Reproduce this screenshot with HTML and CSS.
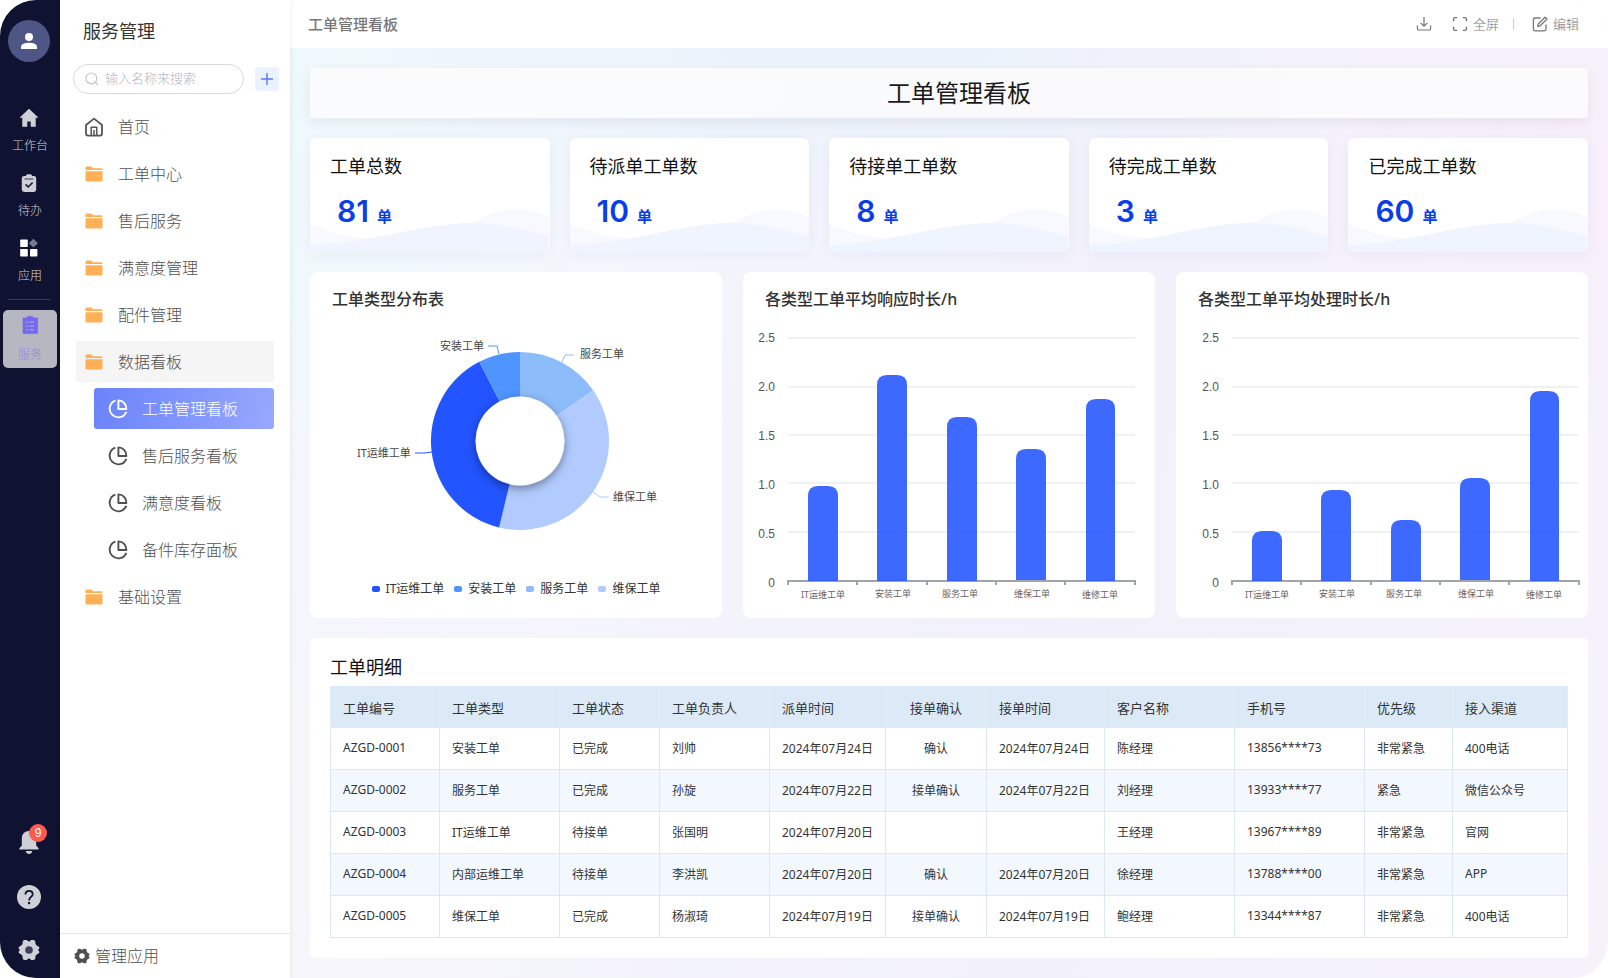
FILE: index.html
```
<!DOCTYPE html>
<html lang="zh-CN">
<head>
    <meta charset="UTF-8">
    <meta name="viewport" content="width=device-width, initial-scale=1.0">
    <title>工单管理看板</title>
    <link rel="stylesheet" href="styles.css">
</head>
<body>
    <!-- 公用图标 -->
    <svg class="symbols" aria-hidden="true">
        <symbol id="icon-folder" viewBox="0 0 18 16">
            <path d="M0.5 4V1.6C0.5 1 1 0.5 1.6 0.5H6.4L8.2 2.2H16C17 2.2 17.5 2.8 17.5 3.6V4Z" fill="#ffb056"/>
            <path d="M0.5 5.2H17.5V14.3C17.5 15 17 15.5 16.4 15.5H1.6C1 15.5 0.5 15 0.5 14.3Z" fill="#ffb056"/>
        </symbol>
        <symbol id="icon-pie" viewBox="0 0 20 20">
            <path d="M7.4 1.6A8.6 8.6 0 1 0 18.3 12.8" fill="none" stroke="currentColor" stroke-width="1.9"/>
            <path d="M10.4 1.4V10H18.4C18.4 5 15 1.6 10.4 1.4Z" fill="none" stroke="currentColor" stroke-width="1.9" stroke-linejoin="round"/>
        </symbol>
        <symbol id="icon-gear" viewBox="0 0 22 22">
            <path fill-rule="evenodd" fill="currentColor" d="M6.8 1H8.6C9.4 1 9.6 2.4 11 2.4S12.6 1 13.4 1H15.2C17 1 17.4 2.2 17.4 3.8C17.4 5.3 18 6.1 19.2 6.8C20.4 7.5 21.4 8 21.4 9C21.4 10 20.2 10 20.2 11S21.4 12 21.4 13C21.4 14 20.4 14.5 19.2 15.2C18 15.9 17.4 16.7 17.4 18.2C17.4 19.8 17 21 15.2 21H13.4C12.6 21 12.4 19.6 11 19.6S9.4 21 8.6 21H6.8C5 21 4.6 19.8 4.6 18.2C4.6 16.7 4 15.9 2.8 15.2C1.6 14.5 0.6 14 0.6 13C0.6 12 1.8 12 1.8 11S0.6 10 0.6 9C0.6 8 1.6 7.5 2.8 6.8C4 6.1 4.6 5.3 4.6 3.8C4.6 2.2 5 1 6.8 1ZM11 7.2A3.8 3.8 0 1 0 11 14.8A3.8 3.8 0 1 0 11 7.2Z"/>
        </symbol>
        <symbol id="wave" viewBox="0 0 240 43" preserveAspectRatio="none">
            <path d="M0 15C25 26 55 31 80 31C115 31 140 25 165 13C180 5 192 0 207 0C220 0 231 4 240 9V43H0Z" fill="#f8f9ff"/>
            <path d="M0 36C25 35 45 32 62 29C90 24 130 14 160 14C190 14 215 20 240 28V43H0Z" fill="#eff4ff"/>
        </symbol>
    </svg>

    <div class="app">
        <aside class="rail">
            <button class="avatar" aria-label="个人中心">
                <svg width="18" height="18" viewBox="0 0 18 18" fill="#fff"><circle cx="9" cy="5" r="4"/><path d="M1 17V15C1 12 5 10.8 9 10.8S17 12 17 15V17Z"/></svg>
            </button>
            <nav class="rail-nav">
                <a class="rail-item" href="#">
                    <svg width="20" height="20" viewBox="0 0 20 20" fill="#cfd0d6"><path d="M10 1L19 9.6H16.4V18.4H12V13.2H8V18.4H3.6V9.6H1Z" stroke="#cfd0d6" stroke-width="0.6" stroke-linejoin="round"/></svg>
                    <span>工作台</span>
                </a>
                <a class="rail-item" href="#">
                    <svg width="20" height="20" viewBox="0 0 20 20"><rect x="2.8" y="3" width="14.4" height="16" rx="2.4" fill="#cfd0d6"/><rect x="7" y="1.2" width="6" height="4.6" rx="1.6" fill="#cfd0d6"/><path d="M5.6 6H14.4" stroke="#0f1230" stroke-width="0.8"/><path d="M6.6 11.4L9.2 14L13.6 9.4" fill="none" stroke="#0f1230" stroke-width="1.5"/></svg>
                    <span>待办</span>
                </a>
                <a class="rail-item" href="#">
                    <svg width="20" height="20" viewBox="0 0 20 20" fill="#fff"><rect x="1.2" y="1.6" width="7.6" height="7.4" rx="0.8"/><rect x="1.2" y="11" width="7.6" height="7.6" rx="0.8"/><rect x="11" y="11" width="7.4" height="7.6" rx="0.8"/><path d="M14.4 0.8L19 5.2L14.4 9.6L9.8 5.2Z" fill="#777a8e"/></svg>
                    <span>应用</span>
                </a>
                <hr>
                <a class="rail-item active" href="#">
                    <svg width="20" height="20" viewBox="0 0 20 20"><path d="M3 3H7V1.8H8.4L10 0.8L11.6 1.8H13V3H17.6V18.6H3Z" fill="#7468f2" stroke="#7468f2" stroke-width="0.6" stroke-linejoin="round"/><path d="M5.8 7.2L6.6 8L7.8 6.4M9.4 7.2H14M5.8 11L6.6 11.8L7.8 10.2M9.4 11H14M5.8 14.8L6.6 15.6L7.8 14M9.4 14.8H14" fill="none" stroke="#b7b7c2" stroke-width="1"/></svg>
                    <span>服务</span>
                </a>
            </nav>
            <div class="rail-tools">
                <button class="rail-tool" aria-label="通知">
                    <svg width="22" height="26" viewBox="0 0 22 26" fill="#cfd0d6"><path d="M11 2C15.2 2 18.2 5 18.2 9.6V16.6L20.6 19.2V20.6H1.4V19.2L3.8 16.6V9.6C3.8 5 6.8 2 11 2Z"/><path d="M7.8 22H14.2C14 24 12.8 25 11 25S8 24 7.8 22Z"/></svg>
                    <span class="badge">9</span>
                </button>
                <button class="rail-tool" aria-label="帮助">
                    <svg width="24" height="24" viewBox="0 0 24 24"><circle cx="12" cy="12" r="12" fill="#cfd0d6"/><path d="M8.4 9.6C8.4 7.2 9.8 5.8 12 5.8S15.7 7.2 15.7 9.2C15.7 11.8 12 12.2 12 15.4" fill="none" stroke="#0f1230" stroke-width="1.8"/><rect x="11" y="17" width="2.2" height="2.2" fill="#0f1230"/></svg>
                </button>
                <button class="rail-tool" aria-label="设置">
                    <svg width="22" height="22"><circle cx="11" cy="11" r="5" fill="#3c3f5a"/><use href="#icon-gear"/></svg>
                </button>
            </div>
        </aside>

        <aside class="sidebar">
            <h2 class="sidebar-title">服务管理</h2>
            <div class="search-row">
                <label class="search">
                    <svg width="14" height="14" viewBox="0 0 14 14" fill="none" stroke="#c0c4cc" stroke-width="1.2"><circle cx="6.4" cy="6.4" r="5.4"/><path d="M10.4 10.4L13 13"/></svg>
                    <input type="text" placeholder="输入名称来搜索" aria-label="搜索">
                </label>
                <button class="add" aria-label="新增">
                    <svg width="12" height="12" viewBox="0 0 12 12" stroke="#5b79f7" stroke-width="1.4"><path d="M6 0V12M0 6H12"/></svg>
                </button>
            </div>
            <nav class="menu">
                <a class="menu-item" href="#">
                    <svg width="20" height="20" viewBox="0 0 20 20" fill="none" stroke="#555" stroke-width="1.8" stroke-linejoin="round"><path d="M2 8L10 1.6L18 8V16.6C18 18 17.4 18.6 16 18.6H4C2.6 18.6 2 18 2 16.6Z"/><path d="M7.2 18.4V10.2H12.8V18.4M10 13V18.4" stroke-width="1.5"/></svg>
                    首页
                </a>
                <a class="menu-item" href="#"><svg width="20" height="16"><use href="#icon-folder"/></svg>工单中心</a>
                <a class="menu-item" href="#"><svg width="20" height="16"><use href="#icon-folder"/></svg>售后服务</a>
                <a class="menu-item" href="#"><svg width="20" height="16"><use href="#icon-folder"/></svg>满意度管理</a>
                <a class="menu-item" href="#"><svg width="20" height="16"><use href="#icon-folder"/></svg>配件管理</a>
                <a class="menu-item open" href="#"><svg width="20" height="16"><use href="#icon-folder"/></svg>数据看板</a>
                <a class="menu-item sub active" href="#"><svg width="20" height="20"><use href="#icon-pie"/></svg>工单管理看板</a>
                <a class="menu-item sub" href="#"><svg width="20" height="20"><use href="#icon-pie"/></svg>售后服务看板</a>
                <a class="menu-item sub" href="#"><svg width="20" height="20"><use href="#icon-pie"/></svg>满意度看板</a>
                <a class="menu-item sub" href="#"><svg width="20" height="20"><use href="#icon-pie"/></svg>备件库存面板</a>
                <a class="menu-item" href="#"><svg width="20" height="16"><use href="#icon-folder"/></svg>基础设置</a>
            </nav>
            <a class="sidebar-footer" href="#"><svg width="16" height="16"><use href="#icon-gear"/></svg>管理应用</a>
        </aside>

        <main class="main">
            <header class="topbar">
                <span class="topbar-title">工单管理看板</span>
                <div class="topbar-actions">
                    <button class="action" aria-label="下载">
                        <svg width="16" height="16" viewBox="0 0 16 16" fill="none" stroke="#777" stroke-width="1.2"><path d="M8 1V10M4.6 6.8L8 10.2L11.4 6.8M1.4 9.4V12.4C1.4 13.4 2 14 3 14H13C14 14 14.6 13.4 14.6 12.4V9.4"/></svg>
                    </button>
                    <button class="action">
                        <svg width="16" height="16" viewBox="0 0 16 16" fill="none" stroke="#777" stroke-width="1.4"><path d="M1.6 5.2V3C1.6 2 2 1.6 3 1.6H5.2M10.8 1.6H13C14 1.6 14.4 2 14.4 3V5.2M14.4 10.8V13C14.4 14 14 14.4 13 14.4H10.8M5.2 14.4H3C2 14.4 1.6 14 1.6 13V10.8"/></svg>
                        全屏
                    </button>
                    <span class="divider"></span>
                    <button class="action">
                        <svg width="16" height="16" viewBox="0 0 16 16" fill="none" stroke="#777" stroke-width="1.3" stroke-linejoin="round"><path d="M8.6 2H3C2 2 1.4 2.6 1.4 3.6V13C1.4 14 2 14.8 3 14.8H12.4C13.4 14.8 14 14 14 13V8.4"/><path d="M5.8 10.4L6.2 8L13 1.2L15 3L8.2 9.8Z"/></svg>
                        编辑
                    </button>
                </div>
            </header>

            <div class="content">
                <h1 class="board-title">工单管理看板</h1>

                <section class="stats">
                    <div class="stat">
                        <svg class="stat-wave"><use href="#wave"/></svg>
                        <h3>工单总数</h3>
                        <p><strong>81</strong><span>单</span></p>
                    </div>
                    <div class="stat">
                        <svg class="stat-wave"><use href="#wave"/></svg>
                        <h3>待派单工单数</h3>
                        <p><strong>10</strong><span>单</span></p>
                    </div>
                    <div class="stat">
                        <svg class="stat-wave"><use href="#wave"/></svg>
                        <h3>待接单工单数</h3>
                        <p><strong>8</strong><span>单</span></p>
                    </div>
                    <div class="stat">
                        <svg class="stat-wave"><use href="#wave"/></svg>
                        <h3>待完成工单数</h3>
                        <p><strong>3</strong><span>单</span></p>
                    </div>
                    <div class="stat">
                        <svg class="stat-wave"><use href="#wave"/></svg>
                        <h3>已完成工单数</h3>
                        <p><strong>60</strong><span>单</span></p>
                    </div>
                </section>

                <section class="charts">
                    <div class="card chart-card">
                        <h3>工单类型分布表</h3>
                        <svg class="chart" viewBox="0 0 412 260">
                            <defs>
                                <filter id="hole-shadow" x="-30%" y="-30%" width="160%" height="160%">
                                    <feDropShadow dx="0" dy="3" stdDeviation="5" flood-color="#000" flood-opacity="0.4"/>
                                </filter>
                            </defs>
                            <path d="M210 129V40A89 89 0 0 1 283.3 78.5Z" fill="#8dbcfa"/>
                            <path d="M210 129L283.3 78.5A89 89 0 0 1 189.1 215.5Z" fill="#b1cbff"/>
                            <path d="M210 129L189.1 215.5A89 89 0 0 1 169.3 49.8Z" fill="#2254ff"/>
                            <path d="M210 129L169.3 49.8A89 89 0 0 1 210 40Z" fill="#4f95ff"/>
                            <circle cx="210" cy="129" r="44.5" fill="#fff" filter="url(#hole-shadow)"/>
                            <g fill="none">
                                <path d="M178 34H187L189 42" stroke="#4f95ff"/>
                                <path d="M264 43H255L252 50" stroke="#8dbcfa"/>
                                <path d="M105 141H115L122 140" stroke="#2254ff"/>
                                <path d="M299 185H290L283 180" stroke="#b1cbff"/>
                            </g>
                            <g class="pie-label">
                                <text x="130" y="38">安装工单</text>
                                <text x="270" y="46">服务工单</text>
                                <text x="47" y="145">IT运维工单</text>
                                <text x="303" y="189">维保工单</text>
                            </g>
                        </svg>
                        <ul class="legend">
                            <li class="c-it">IT运维工单</li>
                            <li class="c-install">安装工单</li>
                            <li class="c-service">服务工单</li>
                            <li class="c-keep">维保工单</li>
                        </ul>
                    </div>

                    <div class="card chart-card">
                        <h3>各类型工单平均响应时长/h</h3>
                        <svg class="chart" viewBox="0 0 412 300">
                            <path class="grid" d="M45 26H392M45 75H392M45 123H392M45 171H392M45 220H392"/>
                            <path class="axis" d="M45 273V269H392V273M114 269V273M184 269V273M253 269V273M322 269V273"/>
                            <g class="bars">
                                <path d="M65 269V184Q65 174 75 174H85Q95 174 95 184V269Z"/>
                                <path d="M134 269V73Q134 63 144 63H154Q164 63 164 73V269Z"/>
                                <path d="M204 269V115Q204 105 214 105H224Q234 105 234 115V269Z"/>
                                <path d="M273 268V147Q273 137 283 137H293Q303 137 303 147V268Z"/>
                                <path d="M343 269V97Q343 87 353 87H362Q372 87 372 97V269Z"/>
                            </g>
                            <g class="y-label">
                                <text x="32" y="30">2.5</text>
                                <text x="32" y="79">2.0</text>
                                <text x="32" y="128">1.5</text>
                                <text x="32" y="177">1.0</text>
                                <text x="32" y="226">0.5</text>
                                <text x="32" y="275">0</text>
                            </g>
                            <g class="x-label">
                                <text x="80" y="286">IT运维工单</text>
                                <text x="150" y="285">安装工单</text>
                                <text x="217" y="285">服务工单</text>
                                <text x="289" y="285">维保工单</text>
                                <text x="357" y="286">维修工单</text>
                            </g>
                        </svg>
                    </div>

                    <div class="card chart-card">
                        <h3>各类型工单平均处理时长/h</h3>
                        <svg class="chart" viewBox="-11 0 412 300">
                            <path class="grid" d="M45 26H392M45 75H392M45 123H392M45 171H392M45 220H392"/>
                            <path class="axis" d="M45 273V269H392V273M114 269V273M184 269V273M253 269V273M322 269V273"/>
                            <g class="bars">
                                <path d="M65 269V229Q65 219 75 219H85Q95 219 95 229V269Z"/>
                                <path d="M134 269V188Q134 178 144 178H154Q164 178 164 188V269Z"/>
                                <path d="M204 269V218Q204 208 214 208H224Q234 208 234 218V269Z"/>
                                <path d="M273 268V176Q273 166 283 166H293Q303 166 303 176V268Z"/>
                                <path d="M343 269V89Q343 79 353 79H362Q372 79 372 89V269Z"/>
                            </g>
                            <g class="y-label">
                                <text x="32" y="30">2.5</text>
                                <text x="32" y="79">2.0</text>
                                <text x="32" y="128">1.5</text>
                                <text x="32" y="177">1.0</text>
                                <text x="32" y="226">0.5</text>
                                <text x="32" y="275">0</text>
                            </g>
                            <g class="x-label">
                                <text x="80" y="286">IT运维工单</text>
                                <text x="150" y="285">安装工单</text>
                                <text x="217" y="285">服务工单</text>
                                <text x="289" y="285">维保工单</text>
                                <text x="357" y="286">维修工单</text>
                            </g>
                        </svg>
                    </div>
                </section>

                <section class="card table-card">
                    <h3>工单明细</h3>
                    <table class="orders">
                        <colgroup>
                            <col class="w-no"><col class="w-type"><col class="w-state"><col class="w-owner"><col class="w-sent"><col class="w-confirm"><col class="w-taken"><col class="w-client"><col class="w-phone"><col class="w-level"><col class="w-from">
                        </colgroup>
                        <thead>
                            <tr><th>工单编号</th><th>工单类型</th><th>工单状态</th><th>工单负责人</th><th>派单时间</th><th class="center">接单确认</th><th>接单时间</th><th>客户名称</th><th>手机号</th><th>优先级</th><th>接入渠道</th></tr>
                        </thead>
                        <tbody>
                            <tr><td>AZGD-0001</td><td>安装工单</td><td>已完成</td><td>刘帅</td><td>2024年07月24日</td><td class="center">确认</td><td>2024年07月24日</td><td>陈经理</td><td>13856****73</td><td>非常紧急</td><td>400电话</td></tr>
                            <tr><td>AZGD-0002</td><td>服务工单</td><td>已完成</td><td>孙旋</td><td>2024年07月22日</td><td class="center">接单确认</td><td>2024年07月22日</td><td>刘经理</td><td>13933****77</td><td>紧急</td><td>微信公众号</td></tr>
                            <tr><td>AZGD-0003</td><td>IT运维工单</td><td>待接单</td><td>张国明</td><td>2024年07月20日</td><td class="center"></td><td></td><td>王经理</td><td>13967****89</td><td>非常紧急</td><td>官网</td></tr>
                            <tr><td>AZGD-0004</td><td>内部运维工单</td><td>待接单</td><td>李洪凯</td><td>2024年07月20日</td><td class="center">确认</td><td>2024年07月20日</td><td>徐经理</td><td>13788****00</td><td>非常紧急</td><td>APP</td></tr>
                            <tr><td>AZGD-0005</td><td>维保工单</td><td>已完成</td><td>杨淑琦</td><td>2024年07月19日</td><td class="center">接单确认</td><td>2024年07月19日</td><td>鲍经理</td><td>13344****87</td><td>非常紧急</td><td>400电话</td></tr>
                        </tbody>
                    </table>
                </section>
            </div>
        </main>
    </div>
</body>
</html>
```
FILE: styles.css
```
* {
    box-sizing: border-box;
}

body {
    margin: 0;
    background: #fff;
    color: #333;
    font-family: "Noto Sans", "Noto Sans CJK SC", sans-serif;
    font-size: 12px;
}

h1, h2, h3, p, ul {
    margin: 0;
    padding: 0;
    font-weight: 400;
}

a {
    color: inherit;
    text-decoration: none;
}

button {
    border: none;
    padding: 0;
    background: none;
    color: inherit;
    font: inherit;
    cursor: pointer;
}

svg {
    display: block;
    flex-shrink: 0;
}

.symbols {
    position: absolute;
    width: 0;
    height: 0;
}

.app {
    display: flex;
    min-height: 100vh;
    border-radius: 36px;
    overflow: hidden;
}

/* 左侧导航 */
.rail {
    display: flex;
    flex-direction: column;
    align-items: center;
    flex-shrink: 0;
    width: 60px;
    padding: 20px 3px 17px;
    background: #0f1230;
    color: #cfd0d6;
}

.avatar {
    display: flex;
    align-items: center;
    justify-content: center;
    width: 42px;
    height: 42px;
    margin-right: 2px;
    border-radius: 50%;
    background: #4d5685;
}

.rail-nav {
    display: flex;
    flex-direction: column;
    align-items: center;
    gap: 7px;
    width: 100%;
    margin-top: 40px;
}

.rail-item {
    display: flex;
    flex-direction: column;
    align-items: center;
    gap: 9px;
    width: 100%;
    height: 58px;
    padding-top: 6px;
    border-radius: 5px;
    font-size: 12px;
    line-height: 18px;
    font-weight: 300;
}

.rail-item svg {
    margin-right: 2px;
}

.rail-item.active {
    gap: 11px;
    padding-top: 5px;
    background: #b7b7c2;
    color: #8f86ee;
    margin-top: 3px;
}

.rail-item.active svg {
    margin-right: 0;
}

.rail-nav hr {
    width: 42px;
    height: 1px;
    margin: 2px 2px 0 0;
    border: none;
    background: #3a3d58;
}

.rail-tools {
    display: flex;
    flex-direction: column;
    align-items: center;
    gap: 30px;
    margin-top: auto;
    padding-right: 2px;
}

.rail-tool {
    position: relative;
}

.badge {
    position: absolute;
    top: -5px;
    left: 11px;
    width: 18px;
    height: 18px;
    border-radius: 50%;
    background: #ff5a50;
    color: #fff;
    font-family: "Liberation Sans", sans-serif;
    font-size: 12px;
    line-height: 18px;
    text-align: center;
}

/* 菜单栏 */
.sidebar {
    position: relative;
    z-index: 1;
    display: flex;
    flex-direction: column;
    flex-shrink: 0;
    width: 230px;
    background: #fff;
    box-shadow: 0 0 6px rgba(0, 0, 0, 0.08);
}

.sidebar-title {
    padding: 16px 23px 0;
    font-size: 18px;
    line-height: 30px;
}

.search-row {
    display: flex;
    align-items: center;
    gap: 11px;
    margin-top: 18px;
    padding: 0 11px 0 13px;
}

.search {
    display: flex;
    flex: 1;
    align-items: center;
    gap: 6px;
    min-width: 0;
    height: 30px;
    padding: 0 11px;
    border: 1px solid #d9d9d9;
    border-radius: 15px;
}

.search input {
    width: 100%;
    min-width: 0;
    padding: 0 0 2px;
    border: none;
    outline: none;
    background: none;
    font: 300 13px "Noto Sans", "Noto Sans CJK SC", sans-serif;
}

.search input::placeholder {
    color: #b4b8c2;
}

.add {
    display: flex;
    align-items: center;
    justify-content: center;
    width: 24px;
    height: 24px;
    border-radius: 3px;
    background: #eaf3ff;
}

.menu {
    display: flex;
    flex-direction: column;
    gap: 6px;
    padding: 12px 16px;
}

.menu-item {
    display: flex;
    align-items: center;
    gap: 14px;
    height: 41px;
    padding: 0 0 2px 8px;
    border-radius: 3px;
    color: #505050;
    font-size: 16px;
    font-weight: 300;
}

.menu-item svg,
.sidebar-footer svg {
    margin-top: 2px;
}

.menu-item.open {
    background: #f5f5f5;
}

.menu-item.sub {
    margin-left: 18px;
    padding-left: 14px;
}

.menu-item.active {
    background: linear-gradient(100deg, #6b83fb, #97a8fe);
    color: #fff;
}

.sidebar-footer {
    display: flex;
    align-items: center;
    gap: 5px;
    height: 45px;
    margin-top: auto;
    padding: 0 0 2px 14px;
    border-top: 1px solid #e8e8e8;
    color: #505050;
    font-size: 16px;
    font-weight: 300;
}

/* 主区域 */
.main {
    flex: 1;
    min-width: 0;
    background:
        radial-gradient(ellipse 320px 260px at 100% 20%, rgba(248, 238, 250, 0.9), rgba(248, 238, 250, 0)),
        radial-gradient(ellipse 460px 300px at 40% 0%, rgba(232, 242, 252, 1), rgba(232, 242, 252, 0)),
        radial-gradient(ellipse 500px 620px at 0% 10%, rgba(238, 248, 251, 1), rgba(238, 248, 251, 0)),
        linear-gradient(100deg, #f7f7fb, #f2f1fb 60%, #f5f2fa);
}

.topbar {
    display: flex;
    align-items: center;
    justify-content: space-between;
    height: 48px;
    padding: 0 29px 0 18px;
    background: #fff;
    color: #777;
}

.topbar-title {
    padding-bottom: 2px;
    font-size: 15px;
    font-weight: 500;
}

.topbar-actions {
    display: flex;
    align-items: center;
}

.action {
    display: flex;
    align-items: center;
    gap: 5px;
    margin-left: 20px;
    font-size: 13px;
    font-weight: 300;
    line-height: 18px;
}

.divider {
    width: 1px;
    height: 12px;
    margin: 0 -2px 0 14px;
    background: #ccc;
}

.content {
    display: flex;
    flex-direction: column;
    gap: 20px;
    padding: 20px;
}

.board-title {
    height: 50px;
    padding-left: 20px;
    border-radius: 4px;
    background: rgba(252, 252, 252, 0.85);
    box-shadow: 0 4px 12px rgba(0, 0, 0, 0.06);
    color: #1a1a1a;
    font-size: 24px;
    line-height: 50px;
    text-align: center;
}

.stats {
    display: grid;
    grid-template-columns: repeat(5, 1fr);
    gap: 20px;
}

.stat {
    position: relative;
    height: 114px;
    padding: 15px 20px;
    border-radius: 6px;
    background: #fff;
    box-shadow: 0 2px 12px rgba(60, 80, 160, 0.05);
    overflow: hidden;
}

.stat-wave {
    position: absolute;
    left: 0;
    bottom: 0;
    width: 100%;
    height: 43px;
}

.stat h3 {
    position: relative;
    color: #111;
    font-size: 18px;
    line-height: 26px;
}

.stat p {
    position: relative;
    display: flex;
    align-items: baseline;
    gap: 8px;
    margin-top: 12px;
    padding-left: 7px;
    color: #0a3ee8;
    line-height: 40px;
}

.stat strong {
    font-family: Inter, sans-serif;
    font-size: 30px;
    font-weight: 600;
}

.stat span {
    font-size: 15px;
    font-weight: 700;
}

.card {
    border-radius: 8px;
    background: #fff;
}

/* 图表 */
.charts {
    display: grid;
    grid-template-columns: repeat(3, 1fr);
    gap: 21px;
}

.chart-card {
    min-height: 346px;
}

.chart-card h3 {
    padding: 14px 22px 0;
    font-size: 16px;
    font-weight: 500;
    line-height: 26px;
}

.chart {
    width: 100%;
    height: auto;
}

.pie-label {
    fill: #444;
    font-size: 11px;
}

.legend {
    display: flex;
    justify-content: center;
    gap: 10px;
    padding-top: 8px;
    color: #333;
    font-size: 12px;
    line-height: 18px;
    list-style: none;
}

.legend li {
    display: flex;
    align-items: center;
    gap: 6px;
}

.legend li::before {
    content: "";
    width: 8px;
    height: 6px;
    border-radius: 2px;
}

.c-it::before {
    background: #2254ff;
}

.c-install::before {
    background: #4f95ff;
}

.c-service::before {
    background: #8dbcfa;
}

.c-keep::before {
    background: #b1cbff;
}

.grid {
    fill: none;
    stroke: #eef2f7;
    stroke-width: 2;
}

.axis {
    fill: none;
    stroke: #a0a4ac;
    stroke-width: 2;
}

.bars {
    fill: #2254ff;
    fill-opacity: 0.88;
}

.y-label {
    fill: #555;
    font-family: "Liberation Sans", sans-serif;
    font-size: 12px;
    text-anchor: end;
}

.x-label {
    fill: #666;
    font-size: 9px;
    text-anchor: middle;
}

/* 工单明细 */
.table-card {
    padding: 16px 21px 20px 20px;
    border-radius: 5px;
}

.table-card h3 {
    color: #111;
    font-size: 18px;
    line-height: 26px;
}

.orders {
    width: 100%;
    margin-top: 6px;
    border-collapse: collapse;
    table-layout: fixed;
}

.orders th,
.orders td {
    height: 42px;
    padding: 0 0 2px 12px;
    border: 1px solid #dbe9f6;
    font-size: 12px;
    font-weight: 400;
    text-align: left;
    white-space: nowrap;
}

.orders th {
    height: 41px;
    padding-bottom: 0;
    border-color: #dceaf7 #e4ecf4;
    background: #dceaf7;
    font-size: 13px;
}

.orders .center {
    padding-left: 0;
    text-align: center;
}

.orders tbody tr:nth-child(even) {
    background: #f3f8ff;
}

.w-no { width: 109px; }
.w-type { width: 120px; }
.w-state { width: 100px; }
.w-owner { width: 110px; }
.w-sent { width: 116px; }
.w-confirm { width: 101px; }
.w-taken { width: 118px; }
.w-client { width: 130px; }
.w-phone { width: 130px; }
.w-level { width: 88px; }
.w-from { width: 115px; }
```
